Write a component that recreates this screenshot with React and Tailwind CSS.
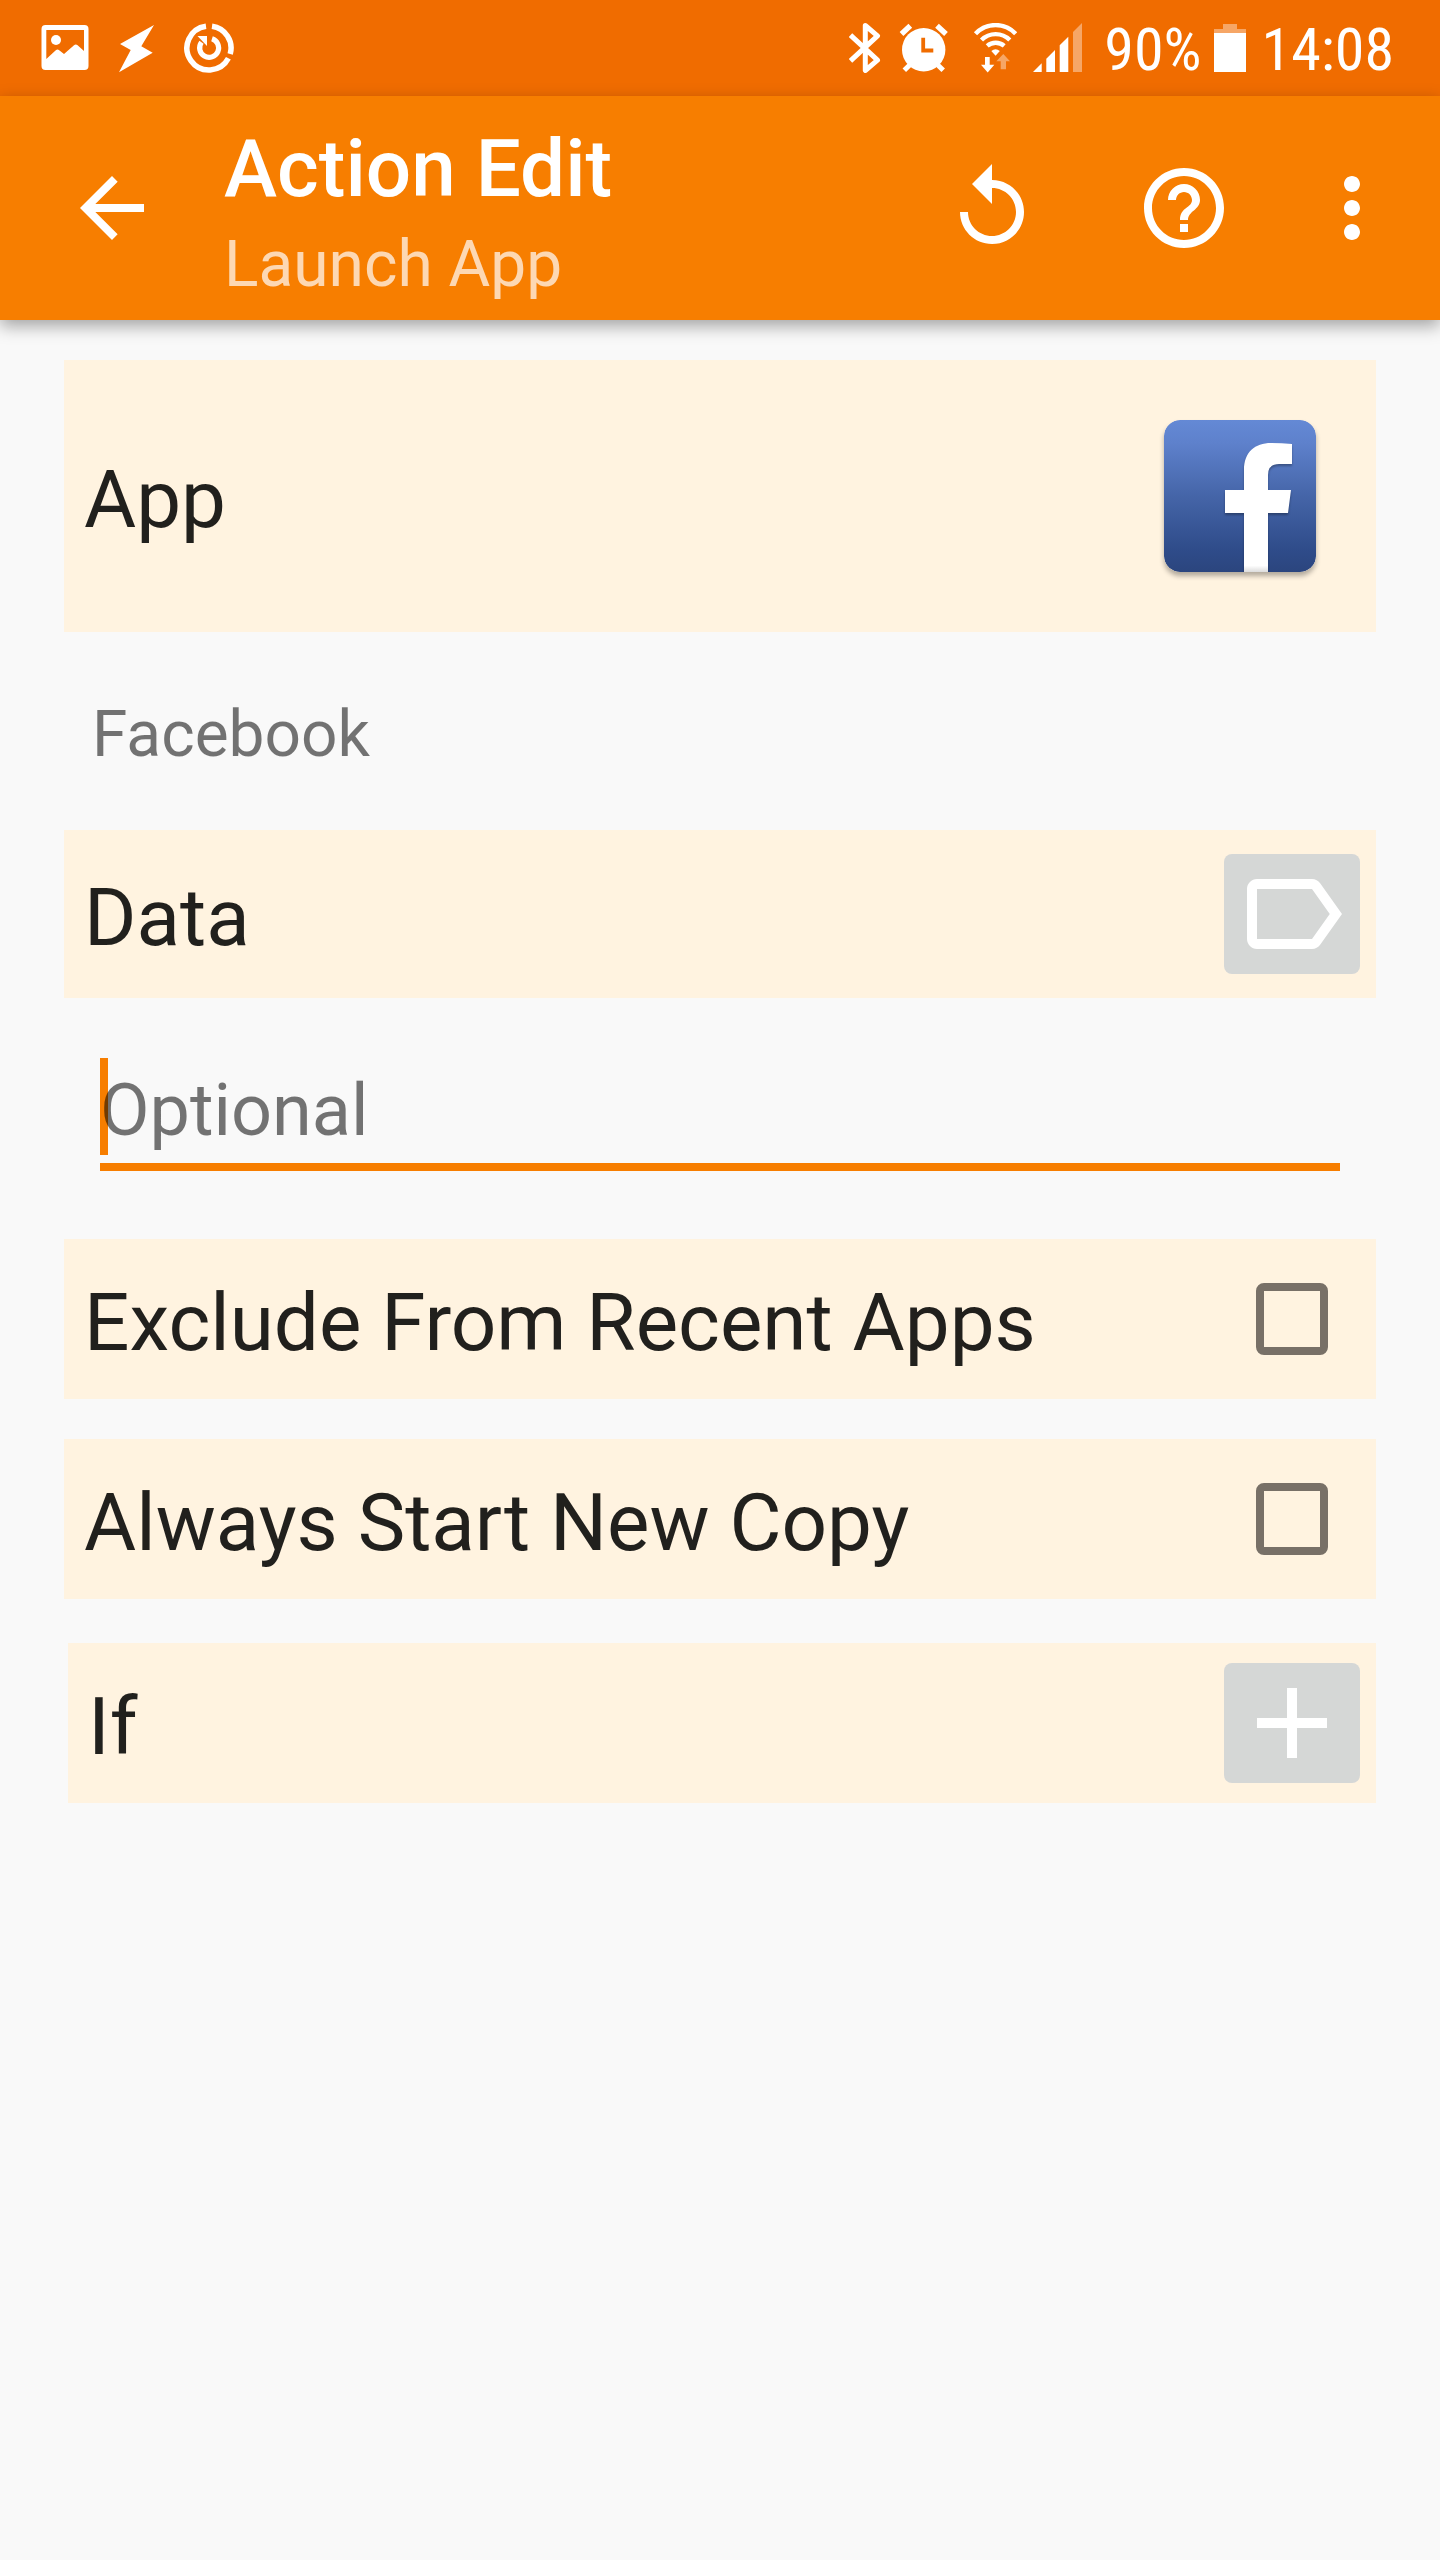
import { useState } from 'react'
import { MdAdd, MdArrowBack, MdHelpOutline, MdLabelOutline, MdMoreVert, MdReplay } from 'react-icons/md'

const OPTIONS = [
  { id: 'exclude', label: 'Exclude From Recent Apps' },
  { id: 'copy', label: 'Always Start New Copy' },
]

function StatusBar() {
  return (
    <div className="flex h-24 items-center justify-between bg-[#f06c00] pl-10 pr-[46px] text-white">
      <div className="flex items-center gap-[22px]">
        {/* Picture */}
        <svg className="h-[50px] w-[50px]" viewBox="0 0 50 50" fill="currentColor">
          <path
            fillRule="evenodd"
            d="M5.5 2h39a4 4 0 0 1 4 4v37a4 4 0 0 1-4 4h-39a4 4 0 0 1-4-4V6a4 4 0 0 1 4-4zM6.3 7v29l9.5-8.7q1.7-1.6 3.4 0L24 31l10-8.7q1.8-1.6 3.6 0L44 28V7z"
          />
          <circle cx="16" cy="17" r="5" />
        </svg>
        {/* Bolt */}
        <svg className="h-[50px] w-[50px]" viewBox="0 0 50 50" fill="currentColor">
          <path d="M42 2L29.3 23.3 40.7 29.7 7 49.3 18.7 27 8 21z" />
        </svg>
        {/* Power ring */}
        <svg className="h-[50px] w-[50px]" viewBox="0 0 50 50" fill="none" stroke="currentColor" strokeWidth="5.5">
          <path d="M28 3.2A22 22 0 0 1 46.2 31" />
          <path d="M44.4 35.3A22 22 0 1 1 22 3.2" />
          <path d="M28 15.8A9.5 9.5 0 1 1 17.5 19.2" strokeWidth="5.2" />
          <path d="M13.5 13H23V23z" fill="currentColor" stroke="none" />
        </svg>
      </div>

      <div className="flex items-center gap-4 font-['Roboto_Condensed','Liberation_Sans_Narrow',Roboto,sans-serif] text-[60px] leading-[72px]">
        {/* Bluetooth */}
        <svg className="h-[50px] w-8" viewBox="0 0 32 50" fill="none" stroke="currentColor" strokeWidth="5" strokeLinejoin="round">
          <path d="M1.5 12.2L28.5 37.2 16.3 47.5V2.5L28.5 12.8 1.5 37.8" />
        </svg>
        {/* Alarm */}
        <svg className="h-[50px] w-[54px]" viewBox="-3 0 54 50" fill="none" stroke="currentColor" strokeWidth="5">
          <circle cx="23.7" cy="26.7" r="21.7" fill="currentColor" stroke="none" />
          <path d="M1.5 11L10.3 2.7M37 2.7L46 11" strokeWidth="5.4" />
          <path d="M4.3 47.3L11 40.7M43.2 47.3L36.5 40.7" />
          <path d="M23.2 14.7V27.5H33.3" stroke="#f06c00" strokeWidth="3.8" />
        </svg>
        {/* Wifi */}
        <svg className="h-[50px] w-[50px]" viewBox="-7 0 50 50" fill="currentColor">
          <g fill="none" stroke="currentColor" strokeWidth="4.4">
            <path d="M1.5 10.8A27.5 27.5 0 0 1 41.7 10.8" />
            <path d="M7.5 17A20 20 0 0 1 35.8 17" />
            <path d="M13.2 22.9A13 13 0 0 1 30.2 22.9" />
          </g>
          <path d="M17.3 28Q21.6 24.4 25.8 28L21.6 32.7z" />
          <path d="M11 34h4.7v7.7h4.6L13.7 49.5 7 41.7h4z" />
          <path d="M29.3 31L36 38.3H32v8H26.7v-8H22.3z" opacity=".4" />
        </svg>
        {/* Mobile signal */}
        <svg className="h-[50px] w-[49px]" viewBox="0 0 49 50" fill="currentColor">
          <path d="M0 49L8.7 40.3V49zM13.3 35.7L22 27V49H13.3zM26.7 22.3L35.3 13.7V49H26.7z" />
          <path d="M40 9L49 0V49H40z" opacity=".4" />
        </svg>
        {/* Battery */}
        <div className="flex items-center gap-3 pl-1.5">
          <span className="pt-1">90%</span>
          <svg className="h-[50px] w-8" viewBox="0 0 32 50" fill="currentColor">
            <path d="M9 1H23V6H32V10H0V6H9z" opacity=".4" />
            <path d="M0 10H32V49H0z" />
          </svg>
        </div>
        <span className="pt-1">14:08</span>
      </div>
    </div>
  )
}

function Toolbar() {
  return (
    <header className="relative flex h-56 items-center bg-[#f77e00] text-white shadow-[0_6px_16px_rgba(0,0,0,0.35)]">
      <button type="button" aria-label="Back" className="flex w-56 justify-center">
        <MdArrowBack size={96} />
      </button>
      <div className="flex-1 pt-[18px]">
        <h1 className="text-[80px] font-medium leading-[96px]">Action Edit</h1>
        <p className="text-[64px] leading-[96px] text-white/70">Launch App</p>
      </div>
      <button type="button" aria-label="Revert" className="flex w-48 justify-center">
        <MdReplay size={96} />
      </button>
      <button type="button" aria-label="Help" className="flex w-48 justify-center">
        <MdHelpOutline size={96} />
      </button>
      <button type="button" aria-label="More options" className="w-40 pl-6">
        <MdMoreVert size={96} />
      </button>
    </header>
  )
}

function FacebookLogo() {
  return (
    <svg className="h-[152px] w-[152px] rounded-2xl shadow-[0_4px_5px_rgba(0,0,0,0.3)]" viewBox="0 0 152 152">
      <defs>
        <linearGradient id="fb" x1="0" y1="0" x2="0" y2="1">
          <stop offset="0" stopColor="#6489d5" />
          <stop offset=".15" stopColor="#5e81cc" />
          <stop offset=".5" stopColor="#4565a8" />
          <stop offset=".85" stopColor="#2f4c8a" />
          <stop offset="1" stopColor="#2b457e" />
        </linearGradient>
        <linearGradient id="stem" x1="0" y1="0" x2="0" y2="1">
          <stop offset=".95" stopColor="#fff" />
          <stop offset="1" stopColor="#dcdcdc" />
        </linearGradient>
      </defs>
      <rect width="152" height="152" rx="16" fill="url(#fb)" />
      <path
        className="drop-shadow-[0_2px_1px_rgba(0,0,0,0.3)]"
        fill="url(#stem)"
        d="M128 24V44H115Q104 44 104 55V70H127L124 93H104V152H80V93H61V70H80V50C80 32 91 23 107 23Q118 23 128 24z"
      />
    </svg>
  )
}

function Row({ className = '', label, htmlFor, children }) {
  const Label = htmlFor ? 'label' : 'h2'
  return (
    <div className={`flex items-center justify-between bg-[#fff3e0] pl-5 ${className}`}>
      <Label htmlFor={htmlFor} className="pt-2 text-[80px] leading-[94px] text-black/87">
        {label}
      </Label>
      {children}
    </div>
  )
}

function IconButton({ label, icon: Icon }) {
  return (
    <button type="button" aria-label={label} className="flex h-[120px] w-[136px] items-center justify-center rounded-lg bg-[#d5d7d6] text-white">
      <Icon size={120} />
    </button>
  )
}

export default function App() {
  const [data, setData] = useState('')
  const [checked, setChecked] = useState({})

  return (
    <div className="min-h-screen bg-[#f9f9f9] font-[Roboto,sans-serif]">
      <StatusBar />
      <Toolbar />

      <main className="px-16 pt-10">
        <Row label="App" className="h-[272px] pr-[60px]">
          <button type="button" aria-label="Choose app">
            <FacebookLogo />
          </button>
        </Row>
        <p className="px-7 pb-[58px] pt-[65px] text-[64px] leading-[75px] text-black/54">Facebook</p>

        <Row label="Data" htmlFor="data" className="h-[168px] pr-4">
          <IconButton label="Insert variable" icon={MdLabelOutline} />
        </Row>
        <div className="px-9 pb-[68px] pt-[60px]">
          <div className="relative border-b-8 border-[#f77e00]">
            {data === '' && <span className="absolute left-0 top-0 h-[97px] w-2 bg-[#f77e00]" />}
            <input
              id="data"
              type="text"
              value={data}
              onChange={(e) => setData(e.target.value)}
              placeholder="Optional"
              className="relative block w-full bg-transparent pb-2.5 pt-[11px] text-[72px] leading-[84px] text-black/87 outline-none placeholder:text-black/54"
            />
          </div>
        </div>

        <div className="flex flex-col gap-10">
          {OPTIONS.map(({ id, label }) => (
            <Row key={id} label={label} htmlFor={id} className="h-40 pr-12">
              <input
                id={id}
                type="checkbox"
                checked={!!checked[id]}
                onChange={(e) => setChecked({ ...checked, [id]: e.target.checked })}
                className="h-[72px] w-[72px] appearance-none rounded-lg border-8 border-[#787067] checked:bg-[#f77e00]"
              />
            </Row>
          ))}
        </div>

        <div className="pl-1 pt-11">
          <Row label="If" className="h-40 pr-4">
            <IconButton label="Add condition" icon={MdAdd} />
          </Row>
        </div>
      </main>
    </div>
  )
}
